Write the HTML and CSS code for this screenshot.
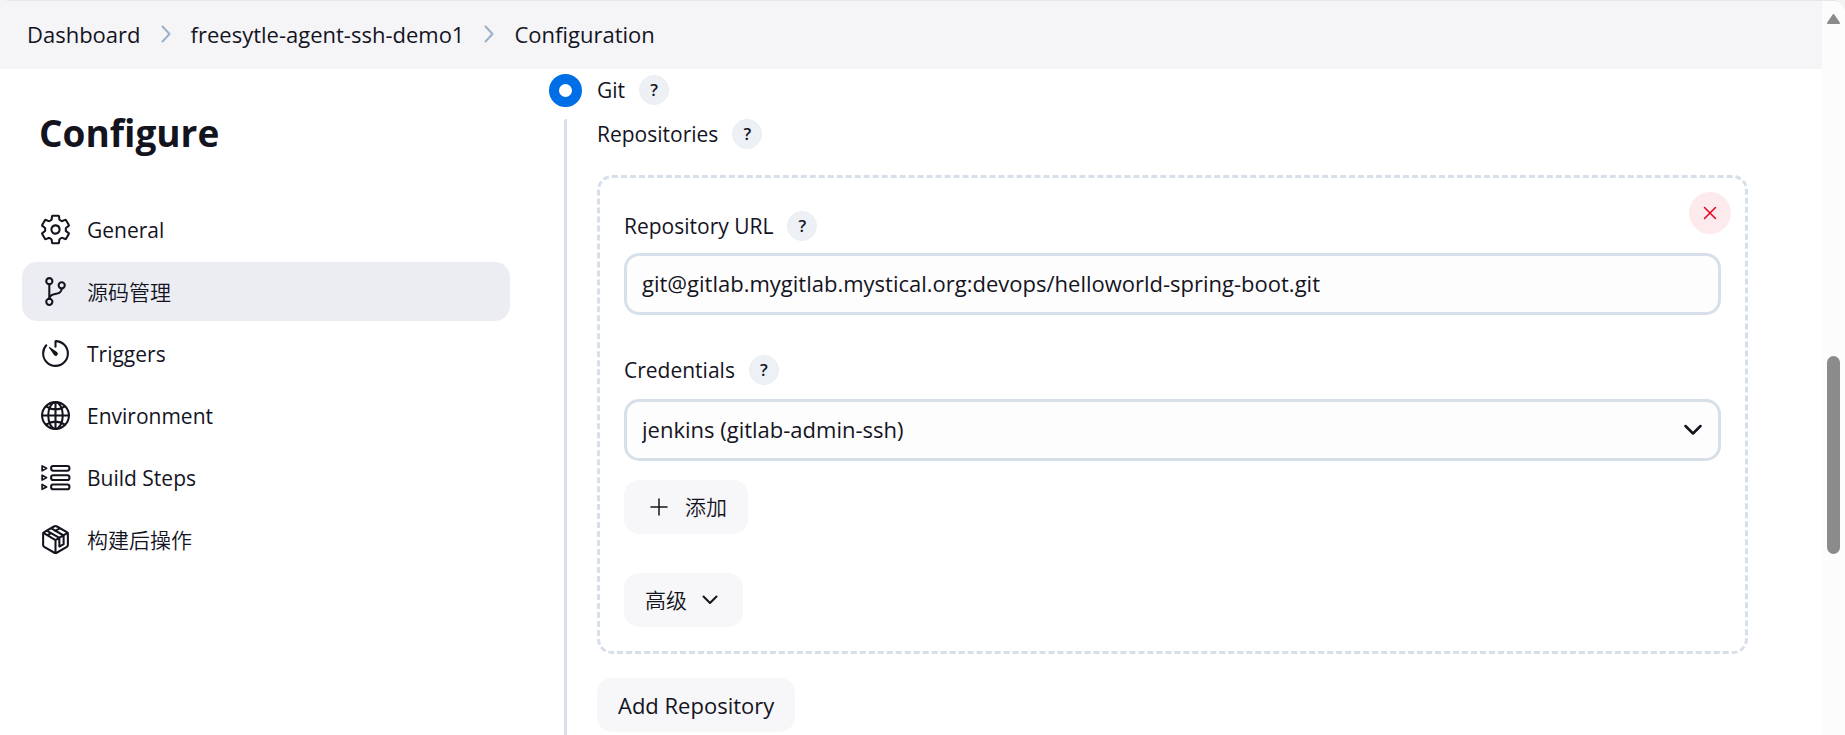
FILE: index.html
```html
<!DOCTYPE html>
<html lang="zh-CN">
<head>
<meta charset="utf-8">
<title>freesytle-agent-ssh-demo1 Configuration</title>
<link rel="stylesheet" href="styles.css">
</head>
<body>
<div class="window">
  <div class="page">
    <nav class="breadcrumbs" aria-label="Breadcrumb">
      <a href="#">Dashboard</a>
      <svg class="crumb-arrow" viewBox="0 0 10 18"><path d="M1.500 1.500L8.500 9L1.500 16.500"/></svg>
      <a href="#">freesytle-agent-ssh-demo1</a>
      <svg class="crumb-arrow" viewBox="0 0 10 18"><path d="M1.500 1.500L8.500 9L1.500 16.500"/></svg>
      <a href="#">Configuration</a>
    </nav>
    <div class="columns">
      <aside class="sidebar">
        <h1 class="title">Configure</h1>
        <nav class="tasks">
          <a class="task" href="#">
            <svg class="icon" viewBox="0 0 512 512"><path d="M262.29 192.31a64 64 0 1057.4 57.4 64.13 64.13 0 00-57.4-57.4zM416.39 256a154.34 154.34 0 01-1.53 20.79l45.21 35.46a10.81 10.81 0 012.45 13.75l-42.77 74a10.81 10.81 0 01-13.14 4.59l-44.9-18.08a16.11 16.11 0 00-15.17 1.75A164.48 164.48 0 01325 400.8a15.94 15.94 0 00-8.82 12.14l-6.73 47.89a11.08 11.08 0 01-10.68 9.17h-85.54a11.11 11.11 0 01-10.69-8.87l-6.72-47.82a16.07 16.07 0 00-9-12.22 155.3 155.3 0 01-21.46-12.57 16 16 0 00-15.11-1.71l-44.89 18.07a10.81 10.81 0 01-13.14-4.58l-42.77-74a10.8 10.8 0 012.45-13.75l38.21-30a16.05 16.05 0 006-14.08c-.36-4.17-.58-8.33-.58-12.5s.21-8.27.58-12.35a16 16 0 00-6.07-13.94l-38.19-30A10.81 10.81 0 0149.48 186l42.77-74a10.81 10.81 0 0113.14-4.59l44.9 18.08a16.11 16.11 0 0015.17-1.75A164.48 164.48 0 01187 111.2a15.94 15.94 0 008.82-12.14l6.73-47.89A11.08 11.08 0 01213.23 42h85.54a11.11 11.11 0 0110.69 8.87l6.72 47.82a16.07 16.07 0 009 12.22 155.3 155.3 0 0121.46 12.57 16 16 0 0015.11 1.71l44.89-18.07a10.81 10.81 0 0113.14 4.58l42.77 74a10.8 10.8 0 01-2.45 13.75l-38.21 30a16.05 16.05 0 00-6.05 14.08c.33 4.14.55 8.3.55 12.47z"/></svg>
            <span>General</span>
          </a>
          <a class="task task-active" href="#" aria-current="true">
            <svg class="icon" viewBox="0 0 512 512"><circle cx="160" cy="96" r="48"/><circle cx="160" cy="416" r="48"/><path d="M160 368V144"/><circle cx="352" cy="160" r="48"/><path d="M352 208c0 128-192 48-192 160"/></svg>
            <span class="cjk">源码管理</span>
          </a>
          <a class="task" href="#">
            <svg class="icon" viewBox="0 0 512 512"><path d="M112.91 128A191.85 191.85 0 0064 254c-1.18 106.35 85.65 193.8 192 194 106.200.2 192-85.83 192-192 0-104.54-83.55-189.61-187.500-192a4.36 4.36 0 00-4.500 4.37V152"/><path class="solid" d="M233.38 278.63l-79-113a8.13 8.13 0 0111.32-11.32l113 79a32.5 32.5 0 01-37.25 53.26 33.21 33.21 0 01-8.07-7.94z"/></svg>
            <span>Triggers</span>
          </a>
          <a class="task" href="#">
            <svg class="icon" viewBox="0 0 512 512"><circle cx="256" cy="256" r="208"/><path d="M256 48c-58.07 0-112.67 93.13-112.67 208S197.93 464 256 464s112.67-93.13 112.67-208S314.07 48 256 48z"/><path d="M117.33 117.33c38.24 27.15 86.38 43.34 138.67 43.34s100.43-16.19 138.67-43.34M394.67 394.67c-38.24-27.15-86.38-43.34-138.67-43.34s-100.43 16.19-138.67 43.34M256 48v416M464 256H48"/></svg>
            <span>Environment</span>
          </a>
          <a class="task" href="#">
            <svg class="icon" viewBox="0 0 512 512"><rect x="188" y="78" width="284" height="72" rx="32"/><rect x="188" y="222" width="284" height="72" rx="32"/><rect x="188" y="366" width="284" height="72" rx="32"/><path class="fine" d="M48 76v76l70-38zM48 220v76l70-38zM48 364v76l70-38z"/></svg>
            <span>Build Steps</span>
          </a>
          <a class="task" href="#">
            <svg class="icon" viewBox="0 0 512 512"><path d="M448 341.37V170.61a32 32 0 00-16.11-27.75l-152-88.46a47.94 47.94 0 00-48.24 0l-151 88.46A32 32 0 0064 170.61v170.76a32 32 0 0016.11 27.74l152 88.46a48 48 0 0048.24 0l152-88.46A32 32 0 00448 341.37z"/><path d="M69 154l187 110 187-110M256 464V264M126 122l190 110v134l66-38V194L192 84M132 190l56-32M252 122l62-36"/></svg>
            <span class="cjk">构建后操作</span>
          </a>
        </nav>
      </aside>
      <main class="scm">
        <div class="scm-option">
          <input class="radio" type="radio" id="scm-git" name="scm" checked>
          <label for="scm-git">Git</label>
          <button class="help" type="button" aria-label="Help for Git">?</button>
        </div>
        <div class="scm-body">
          <div class="field-label repositories">
            <span>Repositories</span>
            <button class="help" type="button" aria-label="Help for Repositories">?</button>
          </div>
          <section class="repository">
            <button class="delete" type="button" aria-label="Delete"><svg viewBox="0 0 14 14"><path d="M1.500 1.500l11 11M12.500 1.500l-11 11"/></svg></button>
            <div class="field-label">
              <label for="repo-url">Repository URL</label>
              <button class="help" type="button" aria-label="Help for Repository URL">?</button>
            </div>
            <input class="control" id="repo-url" type="text" value="git@gitlab.mygitlab.mystical.org:devops/helloworld-spring-boot.git">
            <div class="field-label credentials">
              <label for="credentials">Credentials</label>
              <button class="help" type="button" aria-label="Help for Credentials">?</button>
            </div>
            <div class="select-wrap">
              <select class="control" id="credentials"><option>jenkins (gitlab-admin-ssh)</option></select>
              <svg class="select-arrow" viewBox="0 0 18 12"><path d="M1.500 2L9 9.500L16.500 2"/></svg>
            </div>
            <div class="actions">
              <button class="button button-add cjk" type="button"><svg class="plus" viewBox="0 0 18 18"><path d="M9 1v16M1 9h16"/></svg>添加</button>
              <button class="button button-advanced cjk" type="button">高级<svg class="chevron" viewBox="0 0 16 10"><path d="M1.500 1.500L8 8l6.500-6.500"/></svg></button>
            </div>
          </section>
          <button class="button" type="button">Add Repository</button>
        </div>
      </main>
    </div>
  </div>
  <div class="scrollbar" aria-hidden="true">
    <svg class="scroll-up" viewBox="0 0 15 12"><path d="M7.500 2L13 10H2z"/></svg>
    <div class="thumb"></div>
  </div>
</div>
</body>
</html>
```
FILE: styles.css
```css
* {
  box-sizing: border-box;
}

body {
  margin: 0;
  background: #f3f3f4;
  color: #14141f;
  font-family: "Open Sans", "Noto Sans CJK SC", sans-serif;
  font-size: 22px;
  line-height: 30px;
}

a {
  color: inherit;
  text-decoration: none;
}

button,
input,
select {
  margin: 0;
  color: inherit;
  font: inherit;
}

svg {
  display: block;
  flex: none;
  fill: none;
  stroke: currentColor;
  stroke-linecap: round;
  stroke-linejoin: round;
}

.cjk {
  font-size: 21px;
  font-weight: 350;
}

.window {
  display: flex;
  height: 100vh;
  overflow: hidden;
  border-top: 1px solid #e6e6e8;
  border-radius: 12px 12px 0 0;
  background: #fff;
}

.page {
  display: flex;
  flex: 1;
  flex-direction: column;
  min-width: 0;
}

.breadcrumbs {
  display: flex;
  flex: none;
  align-items: center;
  gap: 20px;
  height: 68px;
  padding: 0 27px 2px;
  background: #f5f5f8;
}

.crumb-arrow {
  width: 10px;
  height: 18px;
  color: #9bb0c9;
  stroke-width: 2;
}

.columns {
  display: flex;
  flex: 1;
  gap: 39px;
  min-height: 0;
  padding: 0 74px 0 22px;
}

.sidebar {
  flex: none;
  width: 488px;
  font-size: 21px;
}

.title {
  margin: 39px 0 43px 17px;
  font-size: 37px;
  font-weight: 700;
  line-height: 49px;
}

.tasks {
  display: grid;
  gap: 3px;
}

.task {
  display: flex;
  align-items: center;
  gap: 15px;
  height: 59px;
  padding: 0 17px;
  border-radius: 15px;
}

.task-active {
  background: #ecedf3;
}

.icon {
  width: 33px;
  height: 33px;
  stroke-width: 32;
}

.solid {
  fill: currentColor;
  stroke: none;
}

.fine {
  stroke-width: 26;
}

.scm {
  display: flex;
  flex: 1;
  flex-direction: column;
  min-width: 0;
}

.scm-option {
  display: flex;
  align-items: center;
  height: 32px;
  margin-top: 5px;
  font-size: 21px;
}

.radio {
  width: 33px;
  height: 33px;
  margin-right: 15px;
  border: 10px solid #006ee6;
  border-radius: 50%;
  appearance: none;
  background: #fff;
}

.help {
  width: 30px;
  height: 30px;
  margin-left: 14px;
  padding: 0;
  border: 1px solid #e8edf2;
  border-radius: 50%;
  background: #edf1f5;
  font-size: 17px;
  font-weight: 600;
  line-height: 28px;
}

.scm-body {
  flex: 1;
  min-height: 0;
  margin: 13px 0 0 15px;
  padding-left: 30px;
  border-left: 3px solid #d7dfe9;
  border-top-left-radius: 2px;
}

.field-label {
  display: flex;
  align-items: center;
  font-size: 21px;
}

.repositories {
  margin-bottom: 26px;
}

.repository {
  position: relative;
  margin-bottom: 24px;
  padding: 33px 24px 24px;
  border: 3px dashed #d7dfe9;
  border-radius: 15px;
}

.delete {
  display: grid;
  position: absolute;
  top: 14px;
  right: 14px;
  place-items: center;
  width: 42px;
  height: 42px;
  padding: 0;
  border: 0;
  border-radius: 50%;
  background: #fdeaec;
  color: #e6001f;
}

.delete svg {
  width: 14px;
  height: 14px;
  stroke-width: 1.5;
}

.control {
  display: block;
  width: 100%;
  height: 62px;
  padding: 0 15px 2px;
  border: 3px solid #d7dfe9;
  border-radius: 15px;
  appearance: none;
  background: #fdfdfd;
}

.repository .field-label {
  margin-bottom: 12px;
}

.repository .credentials {
  margin-top: 40px;
  margin-bottom: 14px;
}

.select-wrap {
  position: relative;
}

.select-arrow {
  position: absolute;
  top: 25px;
  right: 19px;
  width: 18px;
  height: 12px;
  stroke-width: 2.5;
  pointer-events: none;
}

.actions {
  display: flex;
  flex-direction: column;
  align-items: flex-start;
  gap: 39px;
  margin-top: 19px;
}

.button {
  display: flex;
  align-items: center;
  height: 54px;
  padding: 0 21px;
  border: 0;
  border-radius: 15px;
  background: #f7f7f9;
}

.button-add {
  gap: 17px;
  padding-left: 26px;
}

.plus {
  width: 18px;
  height: 18px;
  stroke-width: 1.5;
}

.button-advanced {
  gap: 15px;
  padding-right: 25px;
}

.chevron {
  width: 16px;
  height: 10px;
  stroke-width: 2;
}

.scrollbar {
  display: flex;
  flex: none;
  flex-direction: column;
  align-items: center;
  width: 23px;
  padding-top: 12px;
  background: #fcfcfc;
}

.scroll-up {
  width: 15px;
  height: 12px;
  color: #8b8b8b;
  fill: currentColor;
  stroke-width: 2;
}

.thumb {
  width: 13px;
  height: 27vh;
  margin-top: 45vh;
  border-radius: 7px;
  background: #8b8b8b;
}
```
